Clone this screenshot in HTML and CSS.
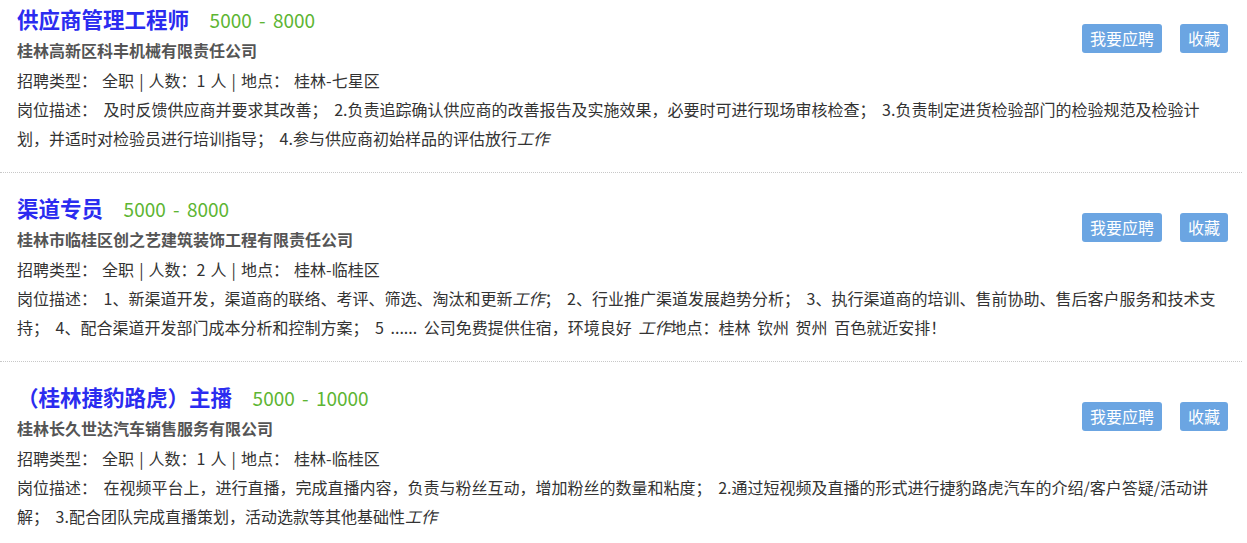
FILE: index.html
```html
<!DOCTYPE html>
<html lang="zh-CN">
<head>
    <meta charset="UTF-8">
    <title>职位列表</title>
    <link rel="stylesheet" href="styles.css">
</head>
<body>
    <div class="job-list">
        <div class="job-item">
            <div class="job-actions">
                <button class="btn">我要应聘</button>
                <button class="btn">收藏</button>
            </div>
            <div class="job-head">
                <a class="job-title" href="#">供应商管理工程师</a>
                <span class="job-salary">5000 - 8000</span>
            </div>
            <div class="job-company">桂林高新区科丰机械有限责任公司</div>
            <div class="job-meta">招聘类型： 全职 | 人数：1 人 | 地点： 桂林-七星区</div>
            <div class="job-desc">岗位描述： 及时反馈供应商并要求其改善； 2.负责追踪确认供应商的改善报告及实施效果，必要时可进行现场审核检查； 3.负责制定进货检验部门的检验规范及检验计划，并适时对检验员进行培训指导； 4.参与供应商初始样品的评估放行<em>工作</em></div>
        </div>
        <div class="job-item">
            <div class="job-actions">
                <button class="btn">我要应聘</button>
                <button class="btn">收藏</button>
            </div>
            <div class="job-head">
                <a class="job-title" href="#">渠道专员</a>
                <span class="job-salary">5000 - 8000</span>
            </div>
            <div class="job-company">桂林市临桂区创之艺建筑装饰工程有限责任公司</div>
            <div class="job-meta">招聘类型： 全职 | 人数：2 人 | 地点： 桂林-临桂区</div>
            <div class="job-desc">岗位描述： 1、新渠道开发，渠道商的联络、考评、筛选、淘汰和更新<em>工作</em>； 2、行业推广渠道发展趋势分析； 3、执行渠道商的培训、售前协助、售后客户服务和技术支持； 4、配合渠道开发部门成本分析和控制方案； 5 ...... 公司免费提供住宿，环境良好 <em>工作</em>地点：桂林 钦州 贺州 百色就近安排！</div>
        </div>
        <div class="job-item">
            <div class="job-actions">
                <button class="btn">我要应聘</button>
                <button class="btn">收藏</button>
            </div>
            <div class="job-head">
                <a class="job-title" href="#">（桂林捷豹路虎）主播</a>
                <span class="job-salary">5000 - 10000</span>
            </div>
            <div class="job-company">桂林长久世达汽车销售服务有限公司</div>
            <div class="job-meta">招聘类型： 全职 | 人数：1 人 | 地点： 桂林-临桂区</div>
            <div class="job-desc">岗位描述： 在视频平台上，进行直播，完成直播内容，负责与粉丝互动，增加粉丝的数量和粘度； 2.通过短视频及直播的形式进行捷豹路虎汽车的介绍/客户答疑/活动讲解； 3.配合团队完成直播策划，活动选款等其他基础性<em>工作</em></div>
        </div>
    </div>
</body>
</html>
```

FILE: styles.css
```css
body {
    margin: 0;
    background-color: #fff;
    font-family: "Microsoft YaHei", "Noto Sans CJK SC", sans-serif;
    color: #333;
    font-size: 16px;
    word-spacing: 3px;
}
.job-list {
    width: 1242px;
}
.job-item {
    padding: 20px 17px 20px 17px;
    border-bottom: 1px dotted #c8c8c8;
}
.job-item:first-child {
    padding-top: 4px;
}
.job-item:last-child {
    border-bottom: none;
}
.job-actions {
    float: right;
    display: flex;
    gap: 18px;
    margin-top: 20px;
    margin-right: -3px;
    word-spacing: 0;
}
.btn {
    height: 29px;
    padding: 0 8px;
    border: none;
    border-radius: 3px;
    background-color: #6ba5e2;
    color: #fff;
    font-family: inherit;
    font-size: 16px;
    line-height: 29px;
    cursor: pointer;
}
.job-head {
    height: 32px;
    line-height: 30px;
}
.job-title {
    font-size: 21.5px;
    font-weight: bold;
    color: #2b2cf0;
    text-decoration: none;
}
.job-salary {
    margin-left: 14px;
    font-size: 19px;
    color: #5db533;
}
.job-company {
    font-size: 16px;
    font-weight: bold;
    color: #555;
    line-height: 28px;
}
.job-meta {
    line-height: 30px;
    margin-top: 1px;
    word-spacing: 1.5px;
}
.job-desc {
    line-height: 28.5px;
}
.job-desc em {
    font-style: italic;
}
```
